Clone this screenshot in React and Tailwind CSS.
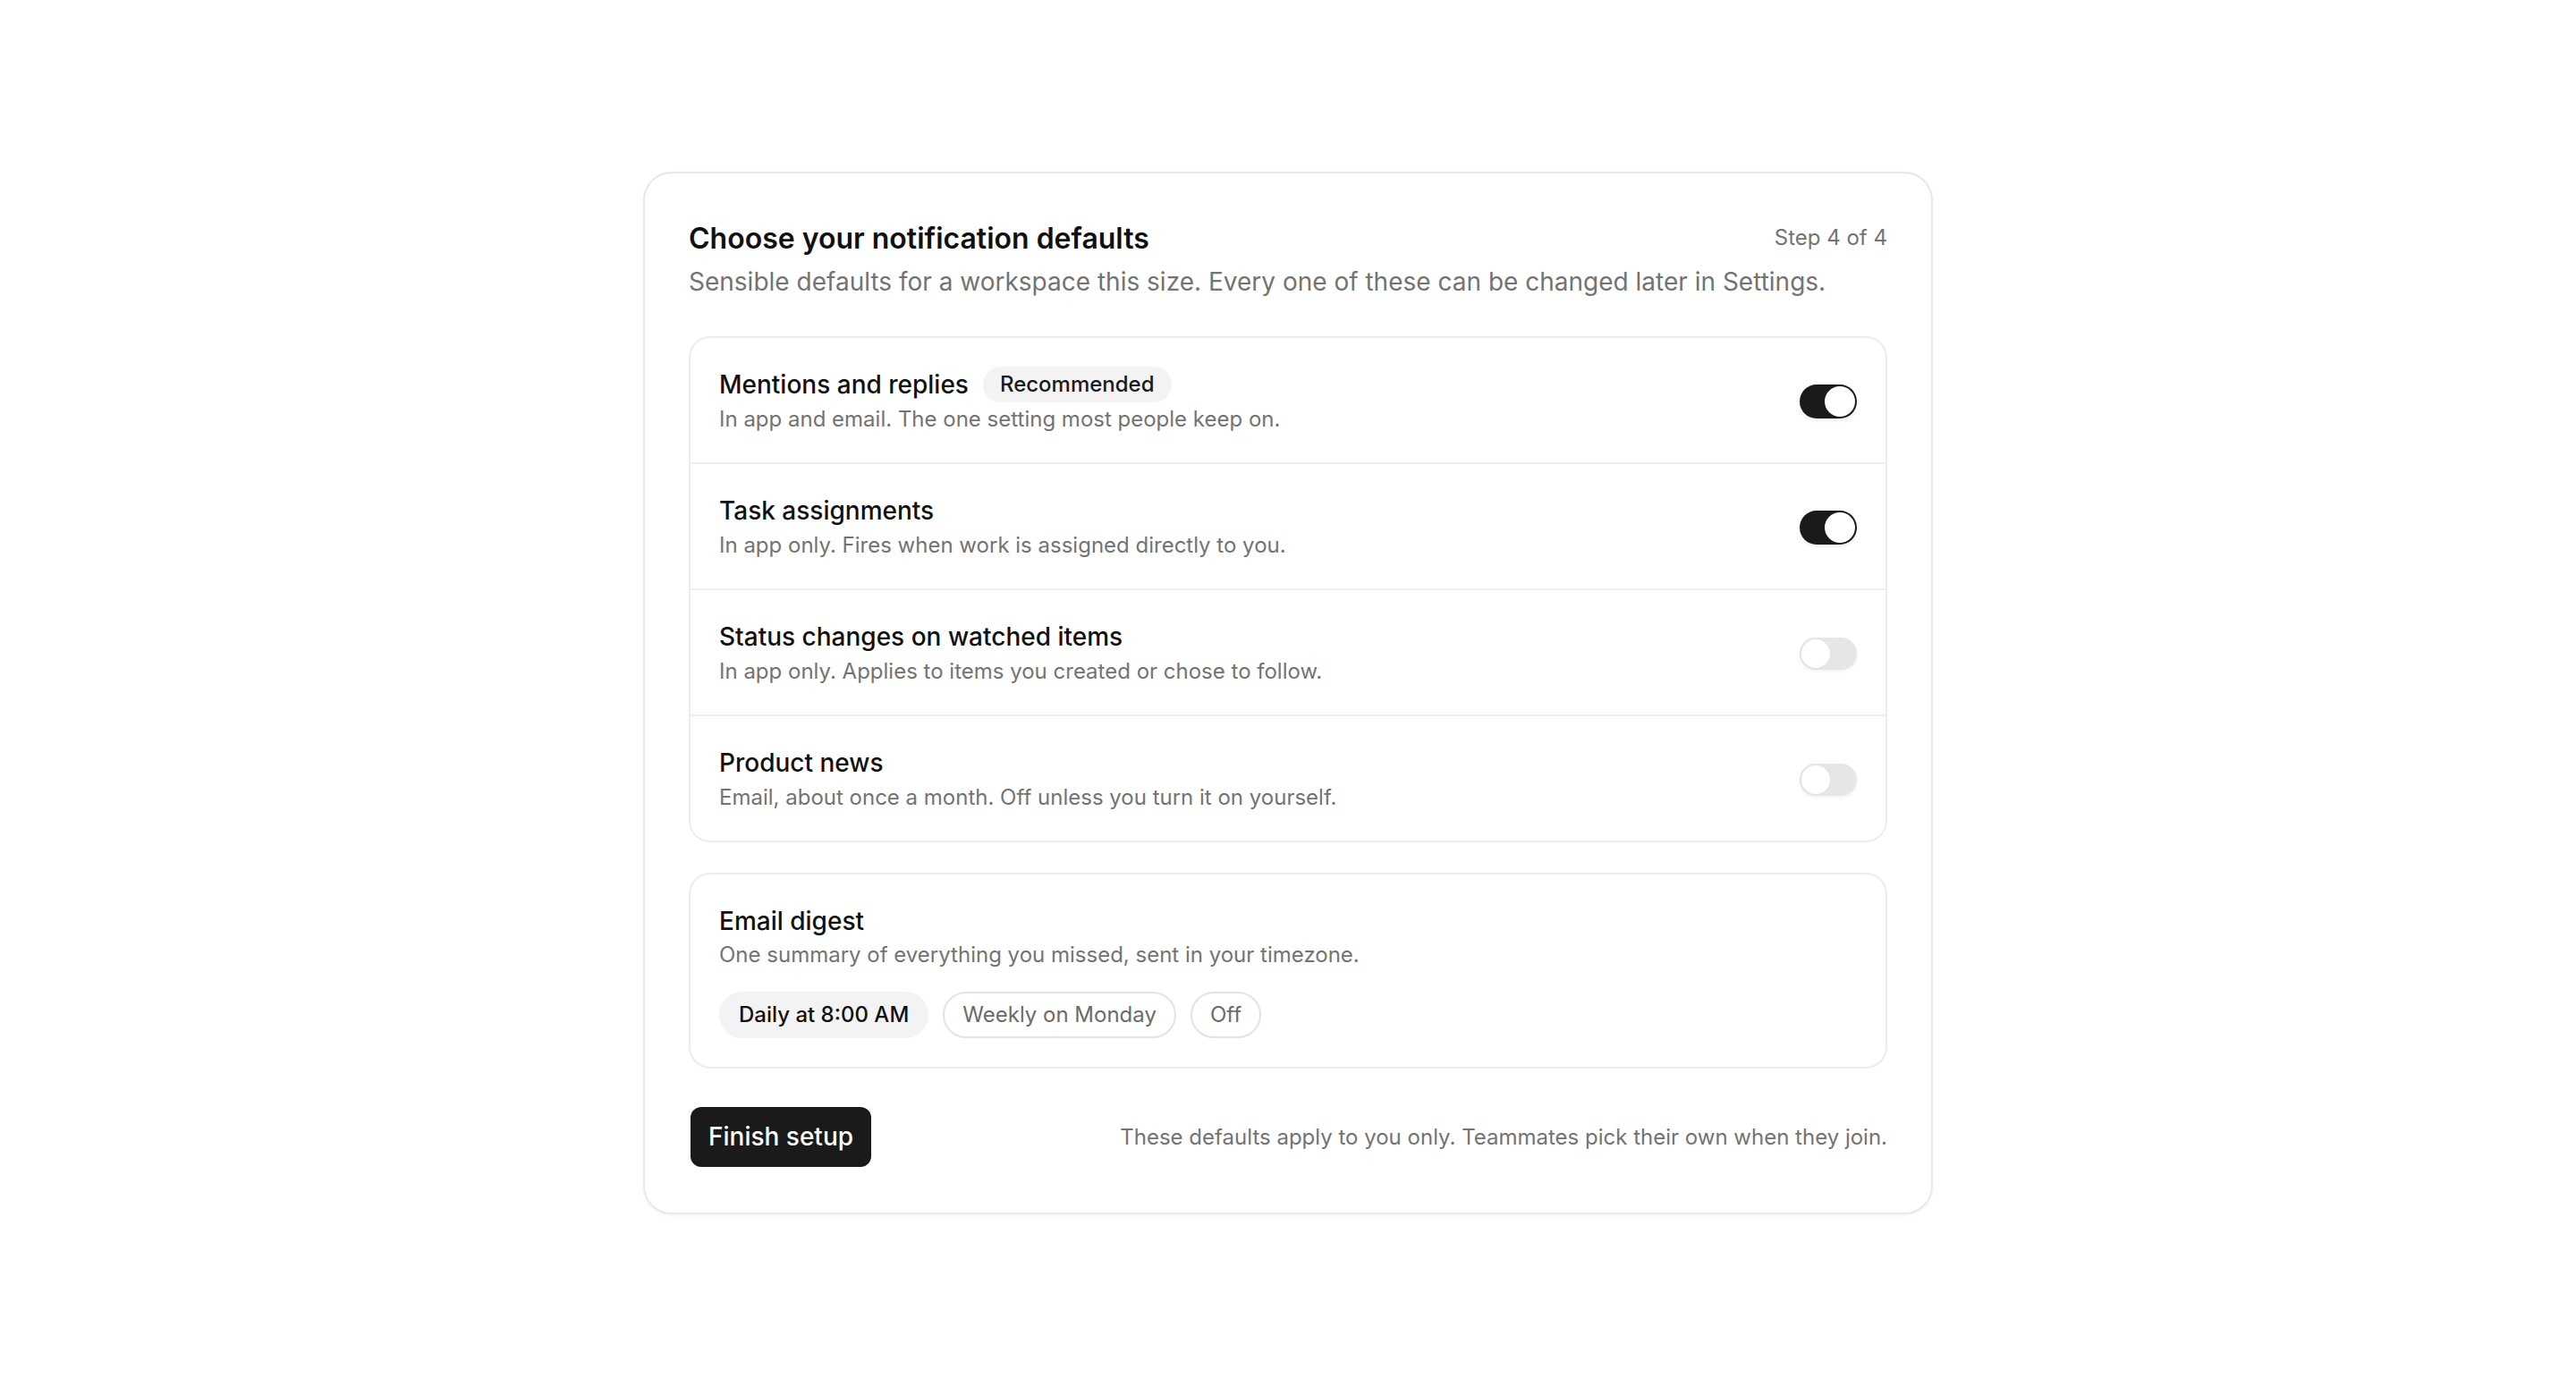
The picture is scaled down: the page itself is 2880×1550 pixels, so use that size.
import React, { useState } from "react";

function Toggle({ on, onClick }) {
  return (
    <button
      type="button"
      onClick={onClick}
      className={
        on
          ? "flex h-[38px] w-16 shrink-0 items-center justify-end rounded-full bg-[#1a1a1a] p-[2px] shadow-[0_2px_4px_rgba(0,0,0,0.08)]"
          : "flex h-[36px] w-16 shrink-0 items-center justify-start rounded-full bg-[#e6e6e6] shadow-[0_2px_4px_rgba(0,0,0,0.05)]"
      }
    >
      <span
        className={
          on
            ? "block h-[34px] w-[34px] rounded-full bg-white"
            : "block h-[36px] w-[36px] rounded-full border-2 border-[#e4e4e4] bg-white"
        }
      />
    </button>
  );
}

const rows = [
  {
    title: "Mentions and replies",
    badge: "Recommended",
    desc: "In app and email. The one setting most people keep on.",
    on: true,
  },
  {
    title: "Task assignments",
    desc: "In app only. Fires when work is assigned directly to you.",
    on: true,
  },
  {
    title: "Status changes on watched items",
    desc: "In app only. Applies to items you created or chose to follow.",
    on: false,
  },
  {
    title: "Product news",
    desc: "Email, about once a month. Off unless you turn it on yourself.",
    on: false,
  },
];

const digestOptions = ["Daily at 8:00 AM", "Weekly on Monday", "Off"];

export default function App() {
  const [state, setState] = useState(rows.map((r) => r.on));
  const [digest, setDigest] = useState(0);

  return (
    <div className="flex min-h-screen items-center justify-center bg-white font-['Inter','Noto_Sans',sans-serif] antialiased">
      <div className="w-[1442px] rounded-[32px] border-2 border-[#e8e8e8] bg-white px-[49px] pt-[49px] pb-[51px] shadow-[0_2px_4px_rgba(0,0,0,0.04)]">
        <div className="flex items-start justify-between">
          <h1 className="text-[32px] font-semibold leading-[48px] text-[#111111]">
            Choose your notification defaults
          </h1>
          <span className="pt-[7px] text-[24px] leading-8 text-[#737373]">Step 4 of 4</span>
        </div>
        <p className="mt-[4px] text-[28px] leading-10 text-[#737373]">
          Sensible defaults for a workspace this size. Every one of these can be changed later in Settings.
        </p>

        <div className="mt-[41px] divide-y-2 divide-[#efefef] rounded-[24px] border-2 border-[#ececec]">
          {rows.map((r, i) => (
            <div key={r.title} className="flex items-center justify-between px-8 pt-[32px] pb-[30px]">
              <div>
                <div className="flex h-10 items-center gap-4">
                  <span className="text-[28px] font-medium leading-10 text-[#111111]">{r.title}</span>
                  {r.badge && (
                    <span className="rounded-full bg-[#f3f3f3] px-[19px] text-[24px] font-medium leading-10 text-[#1a1a1a]">
                      {r.badge}
                    </span>
                  )}
                </div>
                <div className="mt-[1px] text-[24px] leading-9 text-[#737373]">{r.desc}</div>
              </div>
              <Toggle
                on={state[i]}
                onClick={() => setState((s) => s.map((v, j) => (j === i ? !v : v)))}
              />
            </div>
          ))}
        </div>

        <div className="mt-[34px] rounded-[24px] border-2 border-[#ececec] p-8">
          <div className="text-[28px] font-medium leading-10 text-[#111111]">Email digest</div>
          <div className="text-[24px] leading-9 text-[#737373]">
            One summary of everything you missed, sent in your timezone.
          </div>
          <div className="mt-[23px] flex gap-4">
            {digestOptions.map((o, i) => (
              <button
                key={o}
                type="button"
                onClick={() => setDigest(i)}
                className={
                  i === digest
                    ? "rounded-full border-2 border-[#f3f3f3] bg-[#f3f3f3] px-5 py-2 text-[24px] font-medium leading-8 text-[#111111]"
                    : "rounded-full border-2 border-[#e3e3e3] bg-white px-5 py-2 text-[24px] leading-8 text-[#6b6b6b]"
                }
              >
                {o}
              </button>
            ))}
          </div>
        </div>

        <div className="mt-[43px] flex items-center justify-between">
          <button
            type="button"
            className="ml-[2px] rounded-xl bg-[#1a1a1a] px-5 py-[13px] text-[28px] font-medium leading-[41px] text-white"
          >
            Finish setup
          </button>
          <span className="text-[24px] leading-8 text-[#737373]">
            These defaults apply to you only. Teammates pick their own when they join.
          </span>
        </div>
      </div>
    </div>
  );
}
